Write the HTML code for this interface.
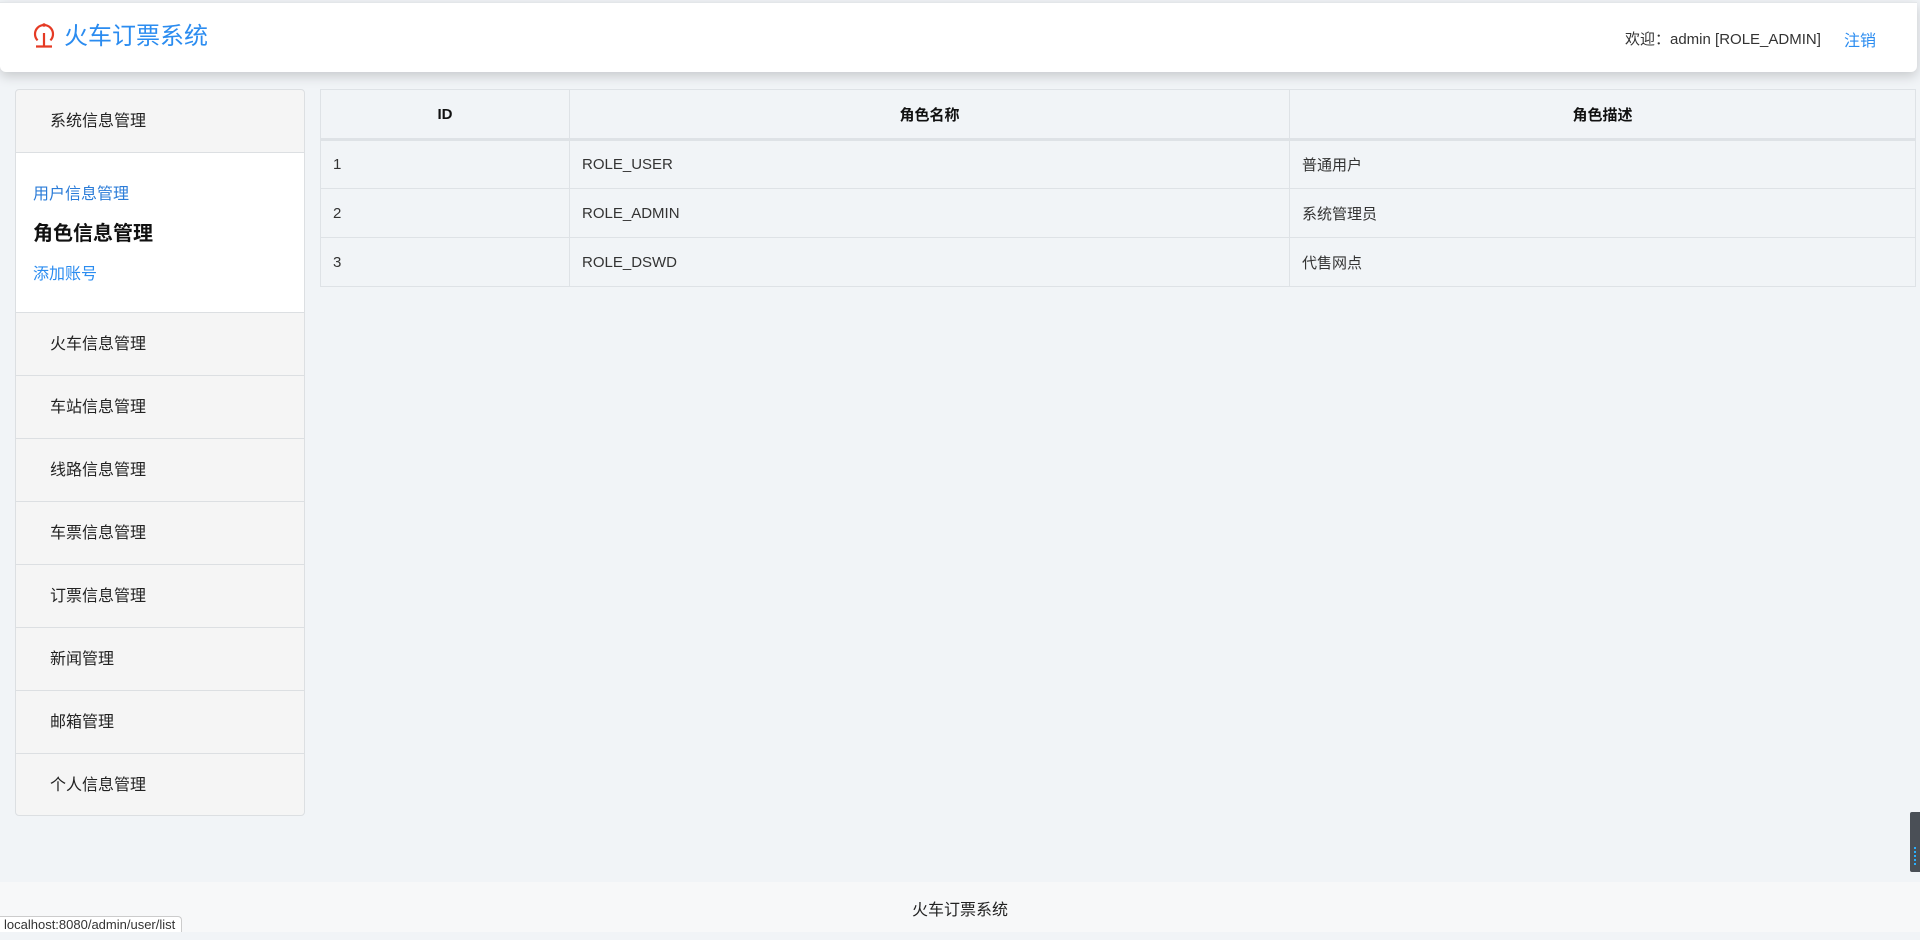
<!DOCTYPE html>
<html><head><meta charset="utf-8"><style>
*{margin:0;padding:0;box-sizing:border-box}
body{width:1920px;height:932px;overflow:hidden;background:#f1f4f7;font-family:"Liberation Sans","Noto Sans CJK SC",sans-serif;color:#212529;position:relative}
.hdr{position:absolute;left:0;top:2px;width:1917px;height:70px;background:#fff;border-top:1px solid #e3e6e9;border-radius:0 0 6px 6px;box-shadow:0 4px 12px rgba(0,0,0,.18)}
.title{position:absolute;left:64px;top:19px;font-size:24px;color:#2b8cf0;line-height:30px}
.logo{position:absolute;left:32px;top:19px}
.wel{position:absolute;left:1625px;top:26px;font-size:15px;color:#333;line-height:22px}
.out{position:absolute;left:1844px;top:28px;font-size:16px;color:#2b8cf0;line-height:22px}
.side{position:absolute;left:15px;top:89px;width:290px;height:727px;border:1px solid #dcdfe2;border-radius:4px;background:#f5f5f5;overflow:hidden}
.it{height:63px;border-bottom:1px solid #dcdfe2;padding-left:34px;line-height:63px;font-size:16px;color:#222}
.it:last-child{border-bottom:none}
.sub{height:160px;background:#fff;border-bottom:1px solid #dcdfe2;position:relative}
.sub div{position:absolute;left:17px}
table{position:absolute;left:320px;top:89px;width:1596px;border-collapse:collapse;background:#f1f4f7;font-size:15px}
td,th{border:1px solid #dee2e6;height:49px;padding-left:12px;text-align:left;font-weight:normal;color:#333}
th{font-weight:bold;text-align:center;color:#111;padding:0;border-bottom:3px solid #dee2e6;height:50px}
.foot{position:absolute;left:0;top:882px;width:1920px;height:50px;background:#f7f8f9;text-align:center;font-size:16px;line-height:58px;color:#222}
.st{position:absolute;left:0;top:916px;width:182px;height:16px;background:#fff;border:1px solid #ccc;border-left:none;border-bottom:none;border-radius:0 4px 0 0;font-size:13px;line-height:16px;padding-left:4px;color:#333}
.wd{position:absolute;left:1910px;top:812px;width:10px;height:60px;background:#4a4f56;border-radius:2px 0 0 2px}
.wd i{position:absolute;left:4px;top:35px;width:2px;height:20px;background:repeating-linear-gradient(#2ab0ff 0 2px,transparent 2px 4px)}
</style></head><body>
<div class="hdr">
<svg class="logo" width="24" height="27" viewBox="0 0 24 27"><path d="M5.6 18.4A9 9 0 1 1 18.4 18.4" fill="none" stroke="#e53a24" stroke-width="2.2"/><circle cx="12" cy="3" r="1.8" fill="#e53a24"/><path d="M12 11v13M4 24.5h16" stroke="#e53a24" stroke-width="2.2" fill="none"/></svg>
<div class="title">火车订票系统</div>
<div class="wel">欢迎：admin [ROLE_ADMIN]</div>
<div class="out">注销</div>
</div>
<div class="side">
<div class="it">系统信息管理</div>
<div class="sub">
<div style="top:27px;font-size:16px;color:#2b7cd8">用户信息管理</div>
<div style="top:64px;font-size:20px;font-weight:bold;color:#111">角色信息管理</div>
<div style="top:107px;font-size:16px;color:#2b8cf0">添加账号</div>
</div>
<div class="it">火车信息管理</div>
<div class="it">车站信息管理</div>
<div class="it">线路信息管理</div>
<div class="it">车票信息管理</div>
<div class="it">订票信息管理</div>
<div class="it">新闻管理</div>
<div class="it">邮箱管理</div>
<div class="it">个人信息管理</div>
</div>
<table>
<tr><th style="width:249px">ID</th><th style="width:720px">角色名称</th><th>角色描述</th></tr>
<tr><td>1</td><td>ROLE_USER</td><td>普通用户</td></tr>
<tr><td>2</td><td>ROLE_ADMIN</td><td>系统管理员</td></tr>
<tr><td>3</td><td>ROLE_DSWD</td><td>代售网点</td></tr>
</table>
<div class="wd"><i></i></div>
<div class="foot">火车订票系统</div>
<div class="st">localhost:8080/admin/user/list</div>
</body></html>
